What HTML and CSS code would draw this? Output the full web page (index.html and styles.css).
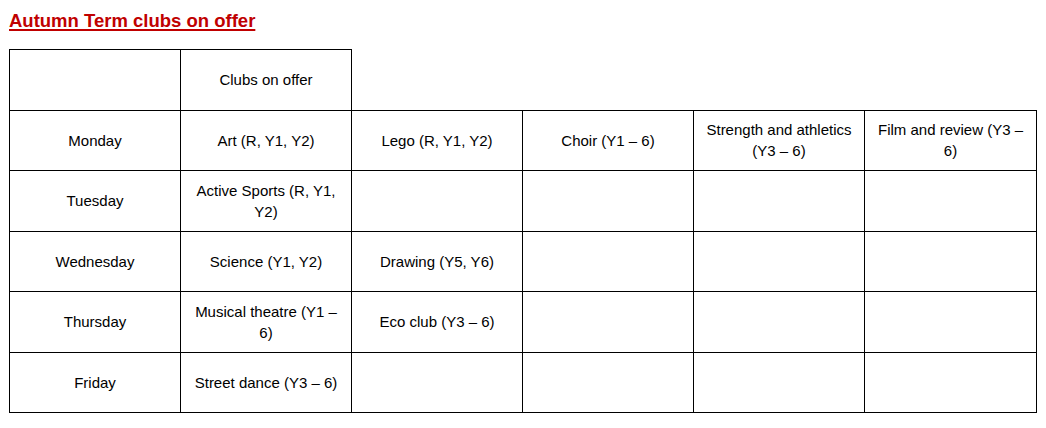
FILE: index.html
```html
<!DOCTYPE html>
<html>
<head>
<meta charset="utf-8">
<link rel="stylesheet" href="styles.css">
</head>
<body>
<h1 class="title">Autumn Term clubs on offer</h1>
<table class="clubs">
  <colgroup>
    <col class="c"><col class="c"><col class="c"><col class="c"><col class="c"><col class="c last">
  </colgroup>
  <tr class="head">
    <td></td>
    <td>Clubs on offer</td>
  </tr>
  <tr>
    <td>Monday</td>
    <td>Art (R, Y1, Y2)</td>
    <td>Lego (R, Y1, Y2)</td>
    <td>Choir (Y1 – 6)</td>
    <td>Strength and athletics<br>(Y3 – 6)</td>
    <td>Film and review (Y3 –<br>6)</td>
  </tr>
  <tr>
    <td>Tuesday</td>
    <td>Active Sports (R, Y1,<br>Y2)</td>
    <td></td><td></td><td></td><td></td>
  </tr>
  <tr>
    <td>Wednesday</td>
    <td>Science (Y1, Y2)</td>
    <td>Drawing (Y5, Y6)</td>
    <td></td><td></td><td></td>
  </tr>
  <tr>
    <td>Thursday</td>
    <td>Musical theatre (Y1 –<br>6)</td>
    <td>Eco club (Y3 – 6)</td>
    <td></td><td></td><td></td>
  </tr>
  <tr>
    <td>Friday</td>
    <td>Street dance (Y3 – 6)</td>
    <td></td><td></td><td></td><td></td>
  </tr>
</table>
</body>
</html>
```
FILE: styles.css
```css
html, body {
  margin: 0;
  padding: 0;
  background: #ffffff;
}
body {
  padding: 10px 9px 0 9px;
  font-family: "Liberation Sans", Arial, sans-serif;
  color: #000000;
}
.title {
  margin: 0 0 17px 0;
  font-size: 18.5px;
  line-height: 22px;
  font-weight: bold;
  color: #c00000;
  text-decoration: underline;
  text-decoration-thickness: 2px;
  text-underline-offset: 2px;
}
.clubs {
  border-collapse: collapse;
  table-layout: fixed;
  width: 1028px;
  font-size: 15px;
  line-height: 21px;
}
.clubs col.c { width: 171px; }
.clubs col.last { width: 172px; }
.clubs td {
  border: 1px solid #000000;
  height: 59.5px;
  padding: 0 6px;
  text-align: center;
  vertical-align: middle;
  white-space: nowrap;
}
```
